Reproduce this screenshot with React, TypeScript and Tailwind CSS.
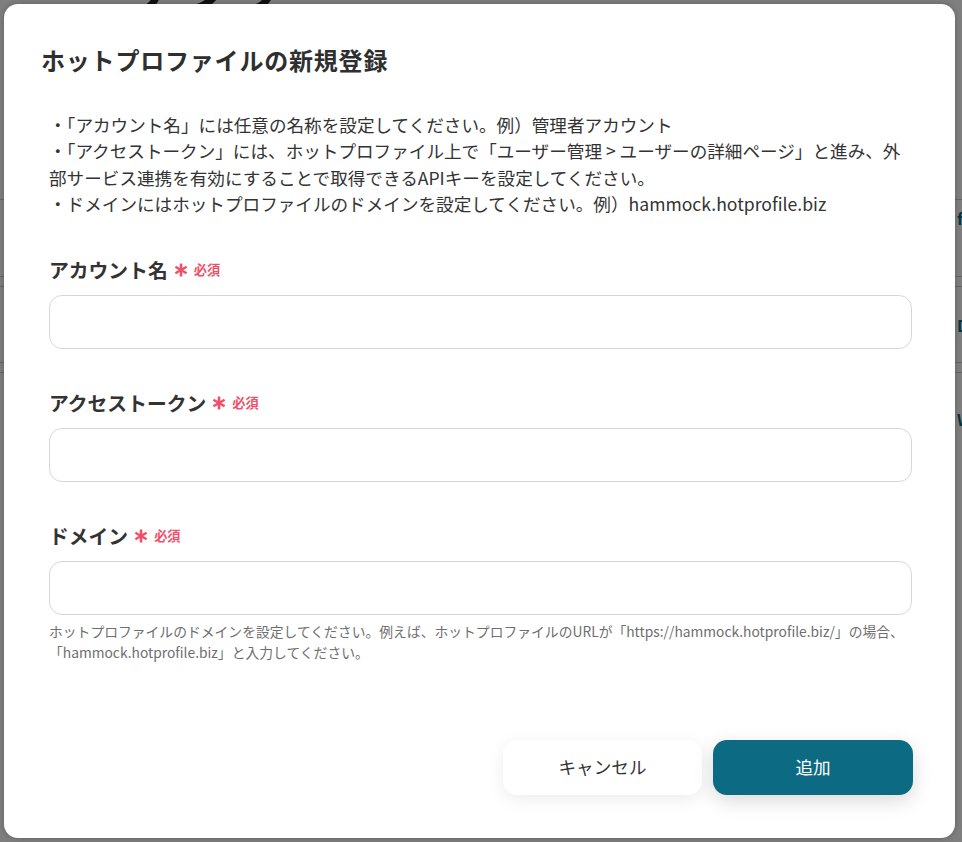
import React from "react";

const Asterisk = () => (
  <svg width="14" height="14" viewBox="0 0 14 14" className="shrink-0">
    <g stroke="#f0506a" strokeWidth="2.6" strokeLinecap="butt">
      <line x1="7" y1="0.5" x2="7" y2="13.5" />
      <line x1="1.4" y1="3.75" x2="12.6" y2="10.25" />
      <line x1="1.4" y1="10.25" x2="12.6" y2="3.75" />
    </g>
  </svg>
);

const Label = ({ text }: { text: string }) => (
  <div className="flex items-center h-[30px]">
    <span className="text-[19.8px] leading-[30px] font-bold text-[#333333]">{text}</span>
    <span className="ml-[6px] flex items-center gap-[6px]">
      <Asterisk />
      <span className="text-[13.2px] font-bold text-[#f0506a] leading-none">必須</span>
    </span>
  </div>
);

const Input = () => (
  <div className="mt-[10px] h-[54px] w-full rounded-[13px] border border-[#d4d8de] bg-white" />
);

export default function App() {
  return (
    <div
      className="relative w-full h-[842px] overflow-hidden bg-white"
      style={{ fontFamily: '"Noto Sans CJK JP", "Noto Sans", sans-serif' }}
    >
      {/* background page */}
      <div className="flex flex-col">
        <div className="-mt-[44px] pl-[134px] text-[50px] font-bold leading-[60px] text-[#222222] whitespace-nowrap">
          アプリ
        </div>
        <div className="mt-[176px] flex flex-col text-[16px] font-bold text-[#0c6a82] whitespace-nowrap">
          <div className="h-[8px] border-b border-[#cccccc]" />
          <div className="h-[76px] pl-[957px] pt-[8px] leading-[20px]">ft</div>
          <div className="h-[11px] border-y border-[#cccccc]" />
          <div className="h-[75px] pl-[957px] flex items-center">D</div>
          <div className="h-[11px] border-y border-[#cccccc]" />
          <div className="h-[80px] pl-[957px] pt-[36px] leading-[20px]">W</div>
        </div>
      </div>

      {/* overlay */}
      <div className="absolute inset-0 bg-black/50 flex items-start justify-start pt-[4px] pl-[4px]">
        <div className="w-[951px] h-[834px] bg-white rounded-[14px] flex flex-col shadow-[0_0_6px_rgba(0,0,0,0.25)]">
          <h2 className="pl-[37px] pt-[38px] text-[24px] tracking-[0.8px] leading-[36px] font-bold text-[#2f2f2f]">
            ホットプロファイルの新規登録
          </h2>

          <div className="mt-[34px] pl-[45px] pr-[43px] text-[17.6px] leading-[26.4px] text-[#333333]">
            <p>・「アカウント名」には任意の名称を設定してください。例）管理者アカウント</p>
            <p>
              ・「アクセストークン」には、ホットプロファイル上で「ユーザー管理 &gt; ユーザーの詳細ページ」と進み、外部サービス連携を有効にすることで取得できるAPIキーを設定してください。
            </p>
            <p>・ドメインにはホットプロファイルのドメインを設定してください。例）hammock.hotprofile.biz</p>
          </div>

          <div className="mt-[37px] pl-[45px] pr-[43px] flex flex-col">
            <Label text="アカウント名" />
            <Input />
            <div className="mt-[39px]">
              <Label text="アクセストークン" />
            </div>
            <Input />
            <div className="mt-[39px]">
              <Label text="ドメイン" />
            </div>
            <Input />
            <p className="mt-[6px] text-[13.8px] leading-[21px] text-[#6e6e6e]">
              ホットプロファイルのドメインを設定してください。例えば、ホットプロファイルのURLが「https://hammock.hotprofile.biz/」の場合、「hammock.hotprofile.biz」と入力してください。
            </p>
          </div>

          <div className="mt-auto mb-[43px] pr-[42px] flex justify-end gap-[11px]">
            <button className="w-[199px] h-[55px] rounded-[14px] bg-white text-[17.6px] text-[#333333] shadow-[0_4px_18px_rgba(0,0,0,0.08)]">
              キャンセル
            </button>
            <button className="w-[200px] h-[55px] rounded-[14px] bg-[#0c6a82] text-[17.6px] text-white shadow-[0_6px_20px_rgba(0,0,0,0.15)]">
              追加
            </button>
          </div>
        </div>
      </div>
    </div>
  );
}
